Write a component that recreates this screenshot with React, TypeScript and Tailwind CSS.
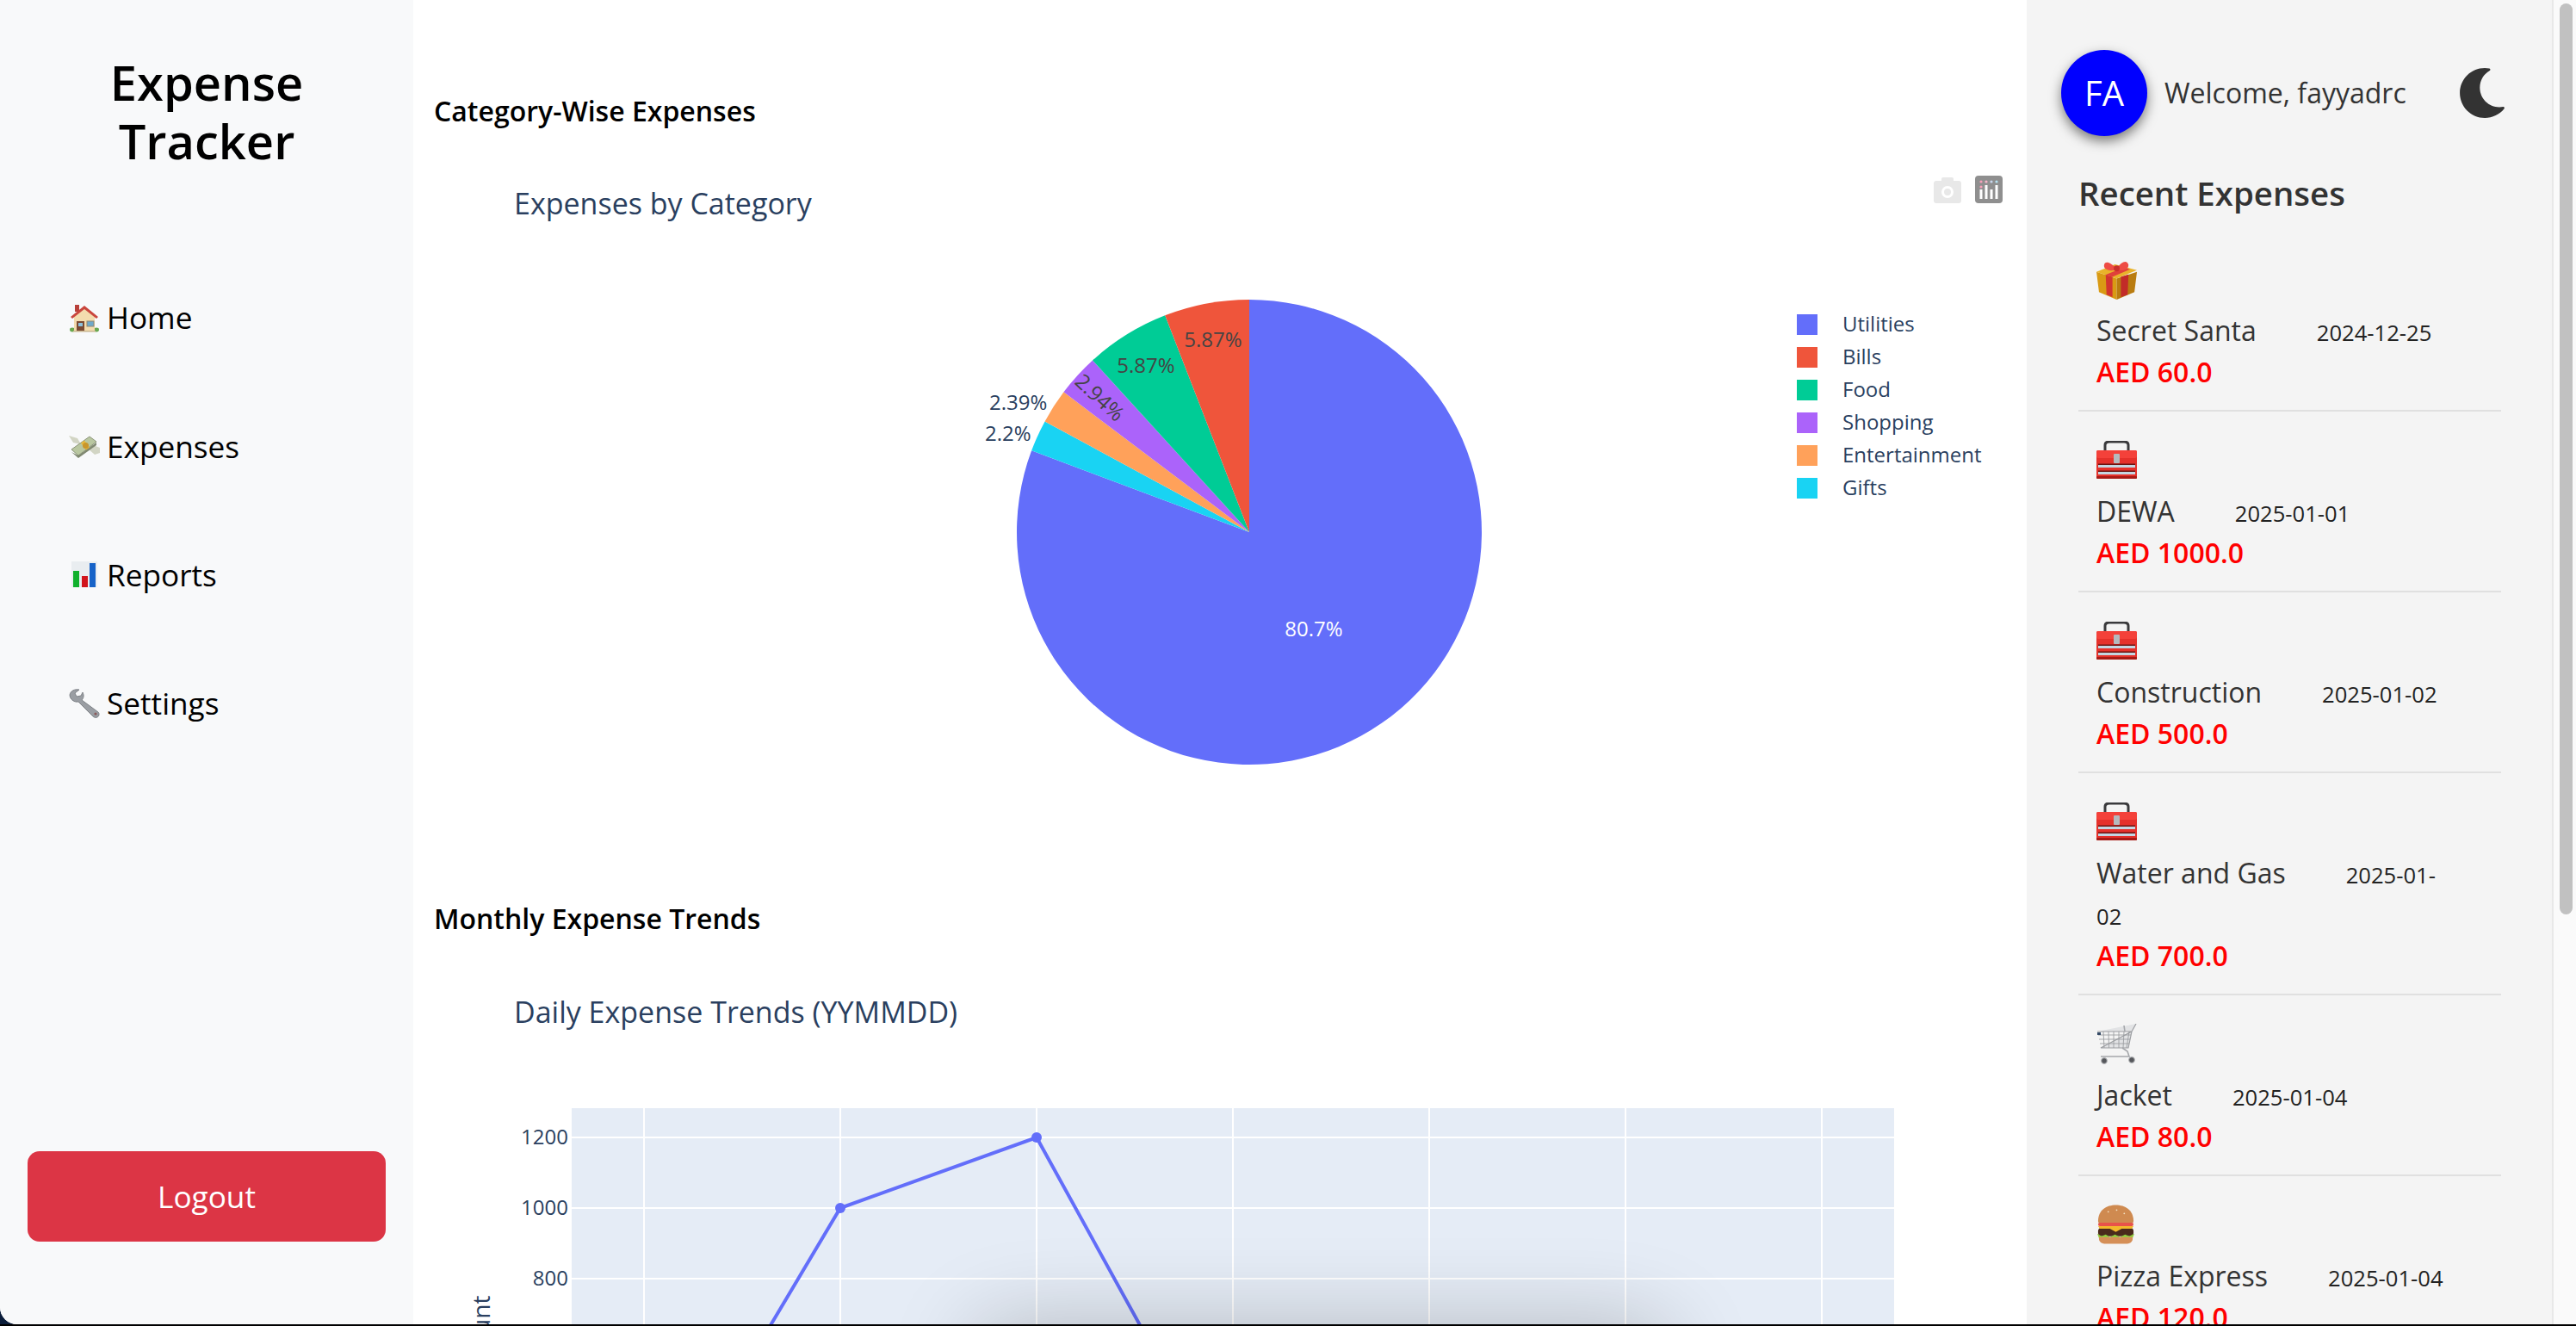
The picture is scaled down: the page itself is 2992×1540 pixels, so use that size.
import { FaMoon } from "react-icons/fa";

// Emoji are drawn by hand because the sandbox has no colour emoji font
const HouseIcon = () => (
  <svg viewBox="0 0 34 34" className="w-[34px] h-[34px]">
    <ellipse cx="3" cy="31" rx="3" ry="2.4" fill="#6aa84f" />
    <ellipse cx="31" cy="31" rx="3" ry="2.4" fill="#6aa84f" />
    <rect x="6" y="2" width="5" height="8" fill="#b8403a" />
    <path d="M5 15 L17 5 L29 15 V33 H5 Z" fill="#f3dcae" />
    <path d="M1 16 L17 3 L33 16 L31 18 L17 7 L3 18 Z" fill="#c9463d" />
    <rect x="8" y="21" width="9" height="12" fill="#7a4a33" />
    <rect x="10" y="23" width="5" height="4" fill="#8cc2de" />
    <rect x="20" y="21" width="8" height="6" fill="#6fa9cb" stroke="#8f8672" strokeWidth="1" />
    <rect x="4" y="32" width="26" height="1.5" fill="#c9b68d" />
  </svg>
);

const MoneyWingsIcon = () => (
  <svg viewBox="0 0 36 34" className="w-[36px] h-[34px]">
    <path d="M0 5 L10 8 L14 15 L5 13 Z" fill="#d2d5c4" />
    <path d="M36 19 L26 15 L22 20 L30 27 L36 25 Z" fill="#d2d5c4" />
    <path d="M3 21 L24 6 L32 12 L11 28 Z" fill="#b9c7a0" stroke="#8b9478" strokeWidth="1" />
    <path d="M14 13.5 L18 10.5 L25 20 L21 23 Z" fill="#e8b93c" />
    <circle cx="19.5" cy="16.5" r="3.5" fill="#c9962a" />
    <path d="M3 24 L11 31 L32 16 L32 13 L11 28 Z" fill="#7f8870" />
  </svg>
);

const BarChartIcon = () => (
  <svg viewBox="0 0 30 30" className="w-[30px] h-[30px]">
    <rect x="0" y="0" width="30" height="30" fill="#e9edf0" />
    <rect x="2" y="11" width="7" height="19" fill="#10b02c" />
    <rect x="12" y="17" width="7" height="13" fill="#d1141c" />
    <rect x="21" y="2" width="7" height="28" fill="#1763c8" />
  </svg>
);

const WrenchIcon = () => (
  <svg viewBox="0 0 36 34" className="w-[36px] h-[34px]">
    <path
      d="M1 7 C2 2 7 0 12 1 L7 5 L9 9 L14 8 L16 4 C18 8 17 11 15 13 L34 27 C36 29 35 32 33 33 C31 34 29 33 28 32 L11 15 C6 16 1 12 1 7 Z"
      fill="#9a9ea3"
      stroke="#6e7277"
      strokeWidth="0.8"
    />
    <circle cx="31" cy="29" r="1.6" fill="#8a5a5a" />
  </svg>
);

const GiftIcon = () => (
  <svg viewBox="0 0 48 48" className="w-[47px] h-[47px]">
    <path d="M0 15 L24 23 V48 L3 39 Z" fill="#d99a14" />
    <path d="M48 15 L24 23 V48 L45 39 Z" fill="#b97c10" />
    <path d="M0 15 L22 6 L48 13 L24 23 Z" fill="#e9b32a" />
    <path d="M11 19 L19 21 V45 L12 42 Z" fill="#d2352f" />
    <path d="M29 21 L38 18 L37 42 L29 45 Z" fill="#c22b28" />
    <path d="M10 19 L32 10 L40 12 L19 21 Z" fill="#e0413a" />
    <path d="M24 12 C16 2 9 2 9 8 C9 13 18 15 24 12 Z" fill="#ee4b44" />
    <path d="M24 12 C30 1 37 1 38 7 C38 13 30 15 24 12 Z" fill="#ee4b44" />
    <circle cx="24" cy="11" r="3.5" fill="#c9302c" />
  </svg>
);

const ToolboxIcon = () => (
  <svg viewBox="0 0 47 44" className="w-[47px] h-[44px]">
    <path d="M10 12 V5 C10 2 12 1 15 1 H32 C35 1 37 2 37 5 V12" fill="none" stroke="#3a3a3c" strokeWidth="3" />
    <rect x="0" y="11" width="47" height="33" rx="2" fill="#e5312b" />
    <rect x="0" y="11" width="47" height="9" rx="2" fill="#f4413a" />
    <rect x="20" y="15" width="7" height="11" rx="1" fill="#b5b9bd" />
    <rect x="2" y="28" width="43" height="3" fill="#c4d6e2" />
    <rect x="2" y="26.5" width="43" height="1.5" fill="#6b1512" />
    <rect x="2" y="36" width="43" height="3" fill="#c4d6e2" />
    <rect x="2" y="34.5" width="43" height="1.5" fill="#6b1512" />
    <rect x="0" y="41" width="47" height="3" rx="1" fill="#a81a16" />
  </svg>
);

const CartIcon = () => (
  <svg viewBox="0 0 47 47" className="w-[47px] h-[47px]">
    <path d="M1 9 L41 9 L46 0 M41 9 L37 28 L5 28 Z" fill="#e2e3e5" stroke="#9c9ea2" strokeWidth="1.2" />
    <path
      d="M8 9 L9 28 M14 9 L14.5 28 M20 9 L20 28 M26 9 L26 28 M32 9 L31 28 M38 9 L35 28 M2 13 H40 M3 18 H39 M4 23 H38"
      stroke="#9c9ea2"
      strokeWidth="0.9"
      fill="none"
    />
    <rect x="1" y="10" width="4" height="3" fill="#344a66" />
    <path d="M30 28 L36 32 L38 38 L5 38 M32 2 L33 9" stroke="#a5a7ab" strokeWidth="1.6" fill="none" />
    <circle cx="9" cy="43" r="3.4" fill="#55575b" stroke="#b5b7ba" />
    <circle cx="41" cy="42" r="3.4" fill="#55575b" stroke="#b5b7ba" />
  </svg>
);

const BurgerIcon = () => (
  <svg viewBox="0 0 46 46" className="w-[45px] h-[46px]">
    <path d="M2 19 C2 6 12 0 23 0 C34 0 44 6 44 19 C44 21 43 22 41 22 H5 C3 22 2 21 2 19 Z" fill="#cf8a50" />
    <circle cx="14" cy="8" r="0.9" fill="#f4e2c4" />
    <circle cx="24" cy="6" r="0.9" fill="#f4e2c4" />
    <circle cx="33" cy="10" r="0.9" fill="#f4e2c4" />
    <rect x="2" y="21" width="42" height="4" rx="2" fill="#e8534a" />
    <rect x="2" y="27" width="42" height="10" rx="4" fill="#4a2a1c" />
    <path d="M2 25 H44 L42 28 L30 28 L23 32 L16 28 L4 28 Z" fill="#f3b92c" />
    <path d="M1 34 L6 37 L11 35 L16 38 L22 35 L28 38 L34 35 L39 37 L45 34 L43 39 H3 Z" fill="#8fcf3c" />
    <path d="M3 38 H43 V40 C43 44 39 46 35 46 H11 C7 46 3 44 3 40 Z" fill="#d58f57" />
  </svg>
);

const navItems = [
  { label: "Home", icon: <HouseIcon /> },
  { label: "Expenses", icon: <MoneyWingsIcon /> },
  { label: "Reports", icon: <BarChartIcon /> },
  { label: "Settings", icon: <WrenchIcon /> },
];

const expenses = [
  { name: "Secret Santa", date: "2024-12-25", amount: "AED 60.0", icon: <GiftIcon /> },
  { name: "DEWA", date: "2025-01-01", amount: "AED 1000.0", icon: <ToolboxIcon /> },
  { name: "Construction", date: "2025-01-02", amount: "AED 500.0", icon: <ToolboxIcon /> },
  { name: "Water and Gas", date: "2025-01-02", amount: "AED 700.0", icon: <ToolboxIcon /> },
  { name: "Jacket", date: "2025-01-04", amount: "AED 80.0", icon: <CartIcon /> },
  { name: "Pizza Express", date: "2025-01-04", amount: "AED 120.0", icon: <BurgerIcon /> },
];

// Clockwise from the top, in the order the pie draws them
const slices = [
  { pct: 80.7, color: "#636efa" },
  { pct: 2.2, color: "#19d3f3" },
  { pct: 2.39, color: "#ffa15a" },
  { pct: 2.94, color: "#ab63fa" },
  { pct: 5.87, color: "#00cc96" },
  { pct: 5.9, color: "#ef553b" },
];

const legend = [
  { label: "Utilities", color: "#636efa" },
  { label: "Bills", color: "#ef553b" },
  { label: "Food", color: "#00cc96" },
  { label: "Shopping", color: "#ab63fa" },
  { label: "Entertainment", color: "#ffa15a" },
  { label: "Gifts", color: "#19d3f3" },
];

const PIE_X = 947;
const PIE_Y = 466;
const PIE_R = 270;

const polar = (pct: number) => {
  const a = (pct / 100) * Math.PI * 2;
  return [PIE_X + PIE_R * Math.sin(a), PIE_Y - PIE_R * Math.cos(a)];
};

const PieChart = () => {
  let run = 0;
  return (
    <svg viewBox="0 0 1826 893" className="block w-[1826px] h-[893px]">
      <text x="93" y="97" fontSize="34" fill="#2a3f5f">Expenses by Category</text>

      {/* modebar */}
      <g transform="translate(1742 54)">
        <rect x="0" y="4" width="32" height="26" rx="3" fill="#e8e8e8" />
        <rect x="9" y="0" width="14" height="6" rx="2" fill="#e8e8e8" />
        <circle cx="16" cy="17" r="7" fill="#fff" />
        <circle cx="16" cy="17" r="4" fill="#e8e8e8" />
      </g>
      <g transform="translate(1790 52)">
        <rect x="0" y="0" width="32" height="32" rx="4" fill="#8f8f8f" />
        <circle cx="7" cy="7" r="1.6" fill="#f7a0b8" />
        <circle cx="13" cy="7" r="1.6" fill="#f4b5c8" />
        <circle cx="19" cy="7" r="1.6" fill="#c9d7ee" />
        <circle cx="25" cy="7" r="1.6" fill="#b5e2f0" />
        <circle cx="7" cy="13" r="1.6" fill="#f7a0b8" />
        <rect x="5.5" y="16" width="3" height="11" fill="#fff" />
        <rect x="11.5" y="11" width="3" height="16" fill="#fff" />
        <rect x="17.5" y="16" width="3" height="11" fill="#fff" />
        <rect x="23.5" y="11" width="3" height="16" fill="#fff" />
      </g>

      {slices.map((s) => {
        const [x1, y1] = polar(run);
        run += s.pct;
        const [x2, y2] = polar(run);
        const large = s.pct > 50 ? 1 : 0;
        return (
          <path
            key={s.color}
            d={`M${PIE_X} ${PIE_Y} L${x1} ${y1} A${PIE_R} ${PIE_R} 0 ${large} 1 ${x2} ${y2} Z`}
            fill={s.color}
          />
        );
      })}

      <g fontSize="24">
        <text x="1022" y="587" textAnchor="middle" fill="#fff">80.7%</text>
        <text x="905" y="251" textAnchor="middle" fill="#444">5.87%</text>
        <text x="827" y="281" textAnchor="middle" fill="#444">5.87%</text>
        <text x="0" y="8" textAnchor="middle" fill="#444" transform="translate(773 310) rotate(43)">2.94%</text>
        <text x="645" y="324" fill="#2a3f5f">2.39%</text>
        <text x="640" y="360" fill="#2a3f5f">2.2%</text>
      </g>

      <g fontSize="24" fill="#2a3f5f">
        {legend.map((l, i) => (
          <g key={l.label}>
            <rect x="1583" y={213 + i * 38} width="24" height="24" fill={l.color} />
            <text x="1636" y={233 + i * 38}>{l.label}</text>
          </g>
        ))}
      </g>
    </svg>
  );
};

const xGrid = [244, 472, 700, 928, 1156, 1384, 1612];
const yGrid = [
  { label: "1200", y: 231 },
  { label: "1000", y: 313 },
  { label: "800", y: 395 },
];

const LineChart = () => (
  <svg viewBox="0 0 1826 893" className="block w-[1826px] h-[893px]">
    <text x="93" y="98" fontSize="34" fill="#2a3f5f">Daily Expense Trends (YYMMDD)</text>

    <rect x="160" y="197" width="1536" height="696" fill="#e5ecf6" />
    {xGrid.map((x) => (
      <line key={x} x1={x} x2={x} y1="197" y2="893" stroke="#fff" strokeWidth="2" />
    ))}
    {yGrid.map((g) => (
      <g key={g.label}>
        <line x1="160" x2="1696" y1={g.y} y2={g.y} stroke="#fff" strokeWidth="2" />
        <text x="156" y={g.y + 8} textAnchor="end" fontSize="24" fill="#2a3f5f">{g.label}</text>
      </g>
    ))}
    <polyline points="244,696 472,313 700,231 928,645" fill="none" stroke="#636efa" strokeWidth="4" />
    <circle cx="472" cy="313" r="6" fill="#636efa" />
    <circle cx="700" cy="231" r="6" fill="#636efa" />
    <text x="0" y="0" textAnchor="middle" fontSize="28" fill="#2a3f5f" transform="translate(65 467) rotate(-90)">Amount</text>
  </svg>
);

export default function App() {
  return (
    <div className="h-[1540px] w-full overflow-hidden bg-black font-['Open_Sans',sans-serif]">
      <div className="h-[1538px] bg-[#0b1d3a]">
        <div className="flex h-full overflow-hidden rounded-bl-[20px] bg-white">
          {/* sidebar */}
          <aside className="flex w-[480px] shrink-0 flex-col bg-[#f8f9fa] pb-[96px] pt-[61px]">
            <h1 className="text-center text-[56px] font-semibold leading-[68px] text-black">
              Expense
              <br />
              Tracker
            </h1>
            <nav className="mt-[97px] flex flex-col">
              {navItems.map((item) => (
                <div key={item.label} className="flex h-[149.3px] items-center pl-[80px]">
                  <span className="flex w-[36px] justify-center">{item.icon}</span>
                  <span className="ml-[8px] text-[35.2px] text-black">{item.label}</span>
                </div>
              ))}
            </nav>
            <button className="mx-[32px] mt-auto h-[105px] rounded-[14px] bg-[#dc3545] text-[35.2px] text-white">
              Logout
            </button>
          </aside>

          {/* charts */}
          <main className="relative min-w-0 flex-1 overflow-hidden bg-white pl-6 pt-[107px]">
            <h3 className="mb-px text-[32px] font-semibold leading-[44px] text-black">Category-Wise Expenses</h3>
            <PieChart />
            <h3 className="mb-px text-[32px] font-semibold leading-[44px] text-black">Monthly Expense Trends</h3>
            <LineChart />
            {/* window shadow that falls over the bottom of the page */}
            <div className="pointer-events-none absolute bottom-[-100px] left-[650px] h-[100px] w-[810px] rounded-[40px] bg-black shadow-[0_0_100px_rgba(0,0,0,0.22)]" />
          </main>

          {/* recent expenses */}
          <section className="w-[612px] shrink-0 overflow-hidden border-r-2 border-[#e8e8e8] bg-[#f4f4f4] pt-[58px]">
            <div className="flex items-center pl-[40px] pr-[52px]">
              <div className="flex h-[100px] w-[100px] items-center justify-center rounded-full bg-[#0000ff] text-[40px] text-white shadow-[0_6px_14px_rgba(0,0,0,0.5)]">
                FA
              </div>
              <span className="ml-[20px] text-[32px] text-[#333]">Welcome, fayyadrc</span>
              <FaMoon className="ml-auto h-[58px] w-[58px] text-[#333]" />
            </div>
            <h2 className="mt-[32px] flex h-[70px] items-center pl-[60px] text-[38.4px] font-semibold text-[#333]">
              Recent Expenses
            </h2>
            <ul className="ml-[60px] mr-[59px] mt-[8px]">
              {expenses.map((e) => (
                <li key={e.name} className="border-b-2 border-[#e0e0e0] pb-[21px] pl-[21px] pr-[55px] pt-5">
                  <div className="flex h-[72px] items-center">{e.icon}</div>
                  <div className="text-[32px] leading-[48px] text-[#333]">
                    <span>{e.name}</span>
                    <span className="ml-[70px] text-[25.6px] leading-[32px] text-[#222]">{e.date}</span>
                  </div>
                  <div className="text-[32px] font-semibold leading-[47px] text-[#ff0000]">{e.amount}</div>
                </li>
              ))}
            </ul>
          </section>

          {/* scrollbar */}
          <div className="w-[26px] shrink-0 bg-[#fafafa] pl-[7px] pr-[4px] pt-[4px]">
            <div className="h-[1058px] rounded-full bg-[#c1c1c1]" />
          </div>
        </div>
      </div>
    </div>
  );
}
